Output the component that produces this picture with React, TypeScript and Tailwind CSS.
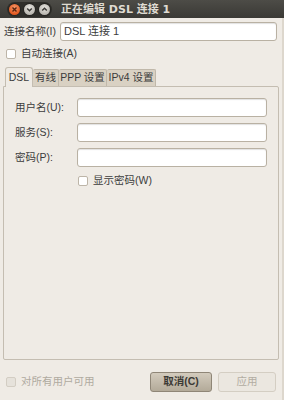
const FONT = { fontFamily: '"Liberation Sans", "Noto Sans CJK SC", sans-serif' }

function Check({ disabled }: { disabled?: boolean }) {
  return (
    <span
      className={
        'inline-block shrink-0 w-[10px] h-[10px] rounded-[2px] border ' +
        (disabled ? 'border-[#d3cdc3] bg-[#e6e2db]' : 'border-[#bdb5a8] bg-white')
      }
    />
  )
}

function Entry({ value, className }: { value?: string; className?: string }) {
  return (
    <div
      className={
        'h-[19px] rounded-[3px] border border-[#b9b1a3] bg-white shadow-[inset_0_1px_1px_rgba(0,0,0,0.12)] flex items-center px-[3px] text-[11px] text-[#3c3c3c] ' +
        (className ?? '')
      }
    >
      {value}
    </div>
  )
}

function WinButton({ kind }: { kind: 'close' | 'min' | 'max' }) {
  const bg =
    kind === 'close'
      ? 'bg-[radial-gradient(circle_at_50%_35%,#f79a6c,#e2581f_70%)]'
      : 'bg-[radial-gradient(circle_at_50%_35%,#e7e5e0,#b7b4ad_75%)]'
  return (
    <div className="w-[13px] h-[13px] rounded-full bg-[#262522] flex items-center justify-center">
      <div className={'w-[11px] h-[11px] rounded-full flex items-center justify-center ' + bg}>
        <svg width="7" height="7" viewBox="0 0 7 7">
          {kind === 'close' && (
            <path d="M1.5 1.5 L5.5 5.5 M5.5 1.5 L1.5 5.5" stroke="#5a2510" strokeWidth="1.4" />
          )}
          {kind === 'min' && <path d="M1.2 2.4 L3.5 4.7 L5.8 2.4" stroke="#3a3935" strokeWidth="1.4" fill="none" />}
          {kind === 'max' && <path d="M1.2 4.6 L3.5 2.3 L5.8 4.6" stroke="#3a3935" strokeWidth="1.4" fill="none" />}
        </svg>
      </div>
    </div>
  )
}

const TAB_OFF =
  'h-[17px] shrink-0 whitespace-nowrap justify-center flex items-center text-[10.5px] bg-[#d9d1c3] border border-b-0 border-l-0 border-[#c0b8aa] rounded-t-[2px]'

export default function App() {
  return (
    <div className="w-[284px] h-[400px] bg-[#efebe5] flex flex-col overflow-hidden text-[#3c3c3c]" style={FONT}>
      {/* Title bar */}
      <div className="h-[18px] shrink-0 bg-gradient-to-b from-[#4d4c47] to-[#3a3935] flex items-center pl-[7px]">
        <div className="flex items-center gap-[2px] bg-[#2f2e2a] rounded-full px-[1px] py-[1px]">
          <WinButton kind="close" />
          <WinButton kind="min" />
          <WinButton kind="max" />
        </div>
        <span
          className="ml-[9px] text-[11px] font-bold text-[#dfdbd2] leading-none"
          style={{ fontFamily: '"DejaVu Sans", "Noto Sans CJK SC", sans-serif' }}
        >
          正在编辑 DSL 连接 1
        </span>
      </div>

      <div className="flex-1 flex flex-col border-r-2 border-[#ddd7cd] text-[10.5px]">
        {/* Name row */}
        <div className="flex items-center mt-[4px] pl-[4px] pr-[5px]">
          <span className="w-[56px] shrink-0 whitespace-nowrap">连接名称(I)</span>
          <Entry value="DSL 连接 1" className="flex-1 h-[19px]" />
        </div>

        {/* Auto connect */}
        <div className="flex items-center gap-[5px] pl-[6px] mt-[7px] h-[12px]">
          <Check />
          <span>自动连接(A)</span>
        </div>

        {/* Notebook */}
        <div className="mt-[6px] mx-[3px] flex flex-col flex-1 mb-[6px]">
          <div className="flex items-end pl-[2px] h-[20px]">
            <div className="h-[20px] w-[28px] shrink-0 justify-center flex items-center bg-[#efebe5] border border-b-0 border-[#c4bdb1] rounded-t-[3px] relative top-[1px] z-10">
              DSL
            </div>
            <div className={TAB_OFF + ' w-[26px]'}>有线</div>
            <div className={TAB_OFF + ' w-[48px]'}>PPP 设置</div>
            <div className={TAB_OFF + ' w-[49px]'}>IPv4 设置</div>
          </div>
          <div className="flex-1 border border-[#c4bdb1] rounded-b-[2px] rounded-tr-[2px] pt-[11px] pl-[11px] pr-[11px]">
            <div className="grid grid-cols-[62px_1fr] gap-y-[6px] items-center">
              <span>用户名(U):</span>
              <Entry />
              <span>服务(S):</span>
              <Entry />
              <span>密码(P):</span>
              <Entry />
            </div>
            <div className="flex items-center gap-[5px] ml-[63px] mt-[6px]">
              <Check />
              <span>显示密码(W)</span>
            </div>
          </div>
        </div>

        {/* Bottom bar */}
        <div className="h-[34px] shrink-0 flex items-center pl-[6px] pr-[6px] pb-[2px]">
          <Check disabled />
          <span className="ml-[5px] text-[#b0aaa0]">对所有用户可用</span>
          <div className="ml-auto flex gap-[6px]">
            <div className="w-[62px] h-[20px] rounded-[3px] border border-[#8f8677] bg-gradient-to-b from-[#d3cbbd] to-[#b3aa99] flex items-center justify-center font-bold text-[#3c3a35]">
              取消(C)
            </div>
            <div className="w-[58px] h-[20px] rounded-[3px] border border-[#d4cec3] bg-[#ebe7e0] flex items-center justify-center text-[#b2aca2]">
              应用
            </div>
          </div>
        </div>
      </div>
    </div>
  )
}
